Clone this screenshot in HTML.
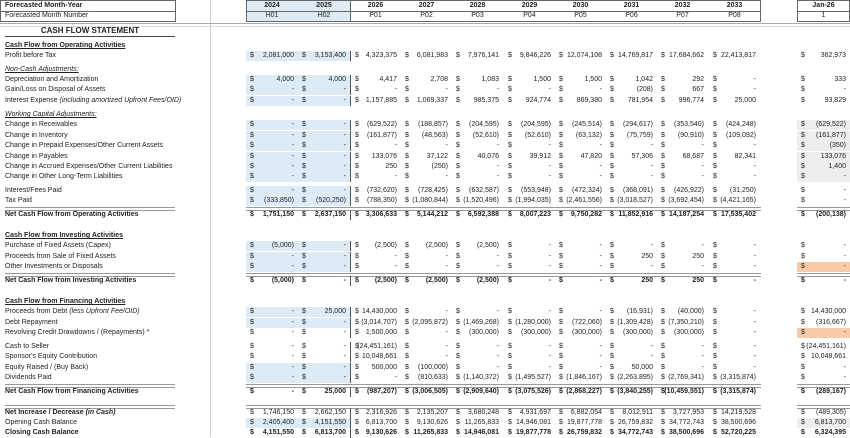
<!DOCTYPE html>
<html><head><meta charset="utf-8"><style>
body{margin:0;width:850px;height:437px;overflow:hidden;background:#fff;font-family:"Liberation Sans",Arial,sans-serif;color:#222;position:relative}
.r{position:absolute;left:0;width:850px;height:10px;line-height:10px;font-size:7px;white-space:nowrap}
.l{position:absolute;left:5px;top:0}
.r i{position:absolute;top:0;width:51px;height:10px;text-align:right;font-style:normal;box-sizing:border-box;padding-right:4px}
.r i::before{content:"$";position:absolute;left:4px}
.r i:nth-of-type(1){left:246px;width:52px}
.r i:nth-of-type(2){left:298px;width:52px}
.r i:nth-of-type(3){left:350px;border-left:1px solid #555}
.r i:nth-of-type(4){left:401px}
.r i:nth-of-type(5){left:452px}
.r i:nth-of-type(6){left:504px}
.r i:nth-of-type(7){left:555px}
.r i:nth-of-type(8){left:606px}
.r i:nth-of-type(9){left:657px}
.r i:nth-of-type(10){left:709px}
.r i:nth-of-type(11){left:797px;width:53px}
.bl i:nth-of-type(1),.bl i:nth-of-type(2){background:#ddebf7}
.gr i:nth-of-type(11){background:#ededed}
.or i:nth-of-type(11){background:#f8cba8}
.b{font-weight:bold}
.h{font-weight:bold;text-decoration:underline}
.s{font-style:italic;text-decoration:underline}
.ln{position:absolute;height:2px;border-top:1px solid #999;border-bottom:1px solid #999}
.box{position:absolute;border:1px solid #666;box-sizing:border-box}
.hc{position:absolute;font-size:7px;line-height:10px;text-align:center;width:51px}
</style></head><body>
<div style="position:absolute;left:210px;top:0;width:1px;height:437px;background:#ccc"></div>
<div style="position:absolute;left:0;top:23px;width:850px;height:2px;border-top:1px solid #aaa;border-bottom:1px solid #ddd"></div>
<div class="box" style="left:0;top:0;width:176px;height:22px"></div>
<div style="position:absolute;left:0;top:11px;width:176px;height:1px;background:#666"></div>
<div class="r b" style="top:1px"><span class="l">Forecasted Month-Year</span></div>
<div class="r" style="top:11px"><span class="l">Forecasted Month Number</span></div>
<div style="position:absolute;left:246px;top:0;width:104px;height:22px;background:#ddebf7"></div>
<div class="box" style="left:246px;top:0;width:515px;height:22px"></div>
<div style="position:absolute;left:246px;top:11px;width:515px;height:1px;background:#666"></div>
<div style="position:absolute;left:350px;top:0;width:1px;height:22px;background:#666"></div>
<div class="box" style="left:797px;top:0;width:53px;height:22px"></div>
<div style="position:absolute;left:797px;top:11px;width:53px;height:1px;background:#666"></div>
<div class="hc b" style="left:246px;top:1px;width:52px">2024</div><div class="hc" style="left:246px;top:11px;width:52px">H01</div>
<div class="hc b" style="left:298px;top:1px;width:52px">2025</div><div class="hc" style="left:298px;top:11px;width:52px">H02</div>
<div class="hc b" style="left:350px;top:1px">2026</div><div class="hc" style="left:350px;top:11px">P01</div>
<div class="hc b" style="left:401px;top:1px">2027</div><div class="hc" style="left:401px;top:11px">P02</div>
<div class="hc b" style="left:452px;top:1px">2028</div><div class="hc" style="left:452px;top:11px">P03</div>
<div class="hc b" style="left:504px;top:1px">2029</div><div class="hc" style="left:504px;top:11px">P04</div>
<div class="hc b" style="left:555px;top:1px">2030</div><div class="hc" style="left:555px;top:11px">P05</div>
<div class="hc b" style="left:606px;top:1px">2031</div><div class="hc" style="left:606px;top:11px">P06</div>
<div class="hc b" style="left:657px;top:1px">2032</div><div class="hc" style="left:657px;top:11px">P07</div>
<div class="hc b" style="left:709px;top:1px">2033</div><div class="hc" style="left:709px;top:11px">P08</div>
<div class="hc b" style="left:797px;top:1px;width:53px">Jan-26</div><div class="hc" style="left:797px;top:11px;width:53px">1</div>

<div style="position:absolute;left:5px;top:26px;width:170px;text-align:center;font-size:8px;font-weight:bold;line-height:10px">CASH FLOW STATEMENT</div>
<div style="position:absolute;left:5px;top:36px;width:170px;height:1px;background:#444"></div>

<div class="r" style="top:41px"><span class="l h">Cash Flow from Operating Activities</span></div>
<div class="r bl" style="top:51px"><span class="l">Profit before Tax</span><i>2,081,000</i><i>3,153,400</i><i>4,323,375</i><i>6,081,983</i><i>7,976,141</i><i>9,846,226</i><i>12,074,108</i><i>14,769,817</i><i>17,684,662</i><i>22,413,817</i><i>362,973</i></div>
<div class="r" style="top:65px"><span class="l s">Non-Cash Adjustments:</span></div>
<div class="r bl" style="top:75px"><span class="l">Depreciation and Amortization</span><i>4,000</i><i>4,000</i><i>4,417</i><i>2,708</i><i>1,083</i><i>1,500</i><i>1,500</i><i>1,042</i><i>292</i><i>-</i><i>333</i></div>
<div class="r bl" style="top:85px"><span class="l">Gain/Loss on Disposal of Assets</span><i>-</i><i>-</i><i>-</i><i>-</i><i>-</i><i>-</i><i>-</i><i>(208)</i><i>667</i><i>-</i><i>-</i></div>
<div class="r bl" style="top:96px"><span class="l">Interest Expense <em>(including amortized Upfront Fees/OID)</em></span><i>-</i><i>-</i><i>1,157,885</i><i>1,069,337</i><i>985,375</i><i>924,774</i><i>869,380</i><i>781,954</i><i>996,774</i><i>25,000</i><i>93,829</i></div>
<div class="r" style="top:110px"><span class="l s">Working Capital Adjustments:</span></div>
<div class="r bl gr" style="top:120px"><span class="l">Change in Receivables</span><i>-</i><i>-</i><i>(629,522)</i><i>(188,857)</i><i>(204,595)</i><i>(204,595)</i><i>(245,514)</i><i>(294,617)</i><i>(353,540)</i><i>(424,248)</i><i>(629,522)</i></div>
<div class="r bl gr" style="top:131px"><span class="l">Change in Inventory</span><i>-</i><i>-</i><i>(161,877)</i><i>(48,563)</i><i>(52,610)</i><i>(52,610)</i><i>(63,132)</i><i>(75,759)</i><i>(90,910)</i><i>(109,092)</i><i>(161,877)</i></div>
<div class="r bl gr" style="top:141px"><span class="l">Change in Prepaid Expenses/Other Current Assets</span><i>-</i><i>-</i><i>-</i><i>-</i><i>-</i><i>-</i><i>-</i><i>-</i><i>-</i><i>-</i><i>(350)</i></div>
<div class="r bl gr" style="top:152px"><span class="l">Change in Payables</span><i>-</i><i>-</i><i>133,076</i><i>37,122</i><i>40,076</i><i>39,912</i><i>47,820</i><i>57,306</i><i>68,687</i><i>82,341</i><i>133,076</i></div>
<div class="r bl gr" style="top:162px"><span class="l">Change in Accrued Expenses/Other Current Liabilities</span><i>-</i><i>-</i><i>250</i><i>(250)</i><i>-</i><i>-</i><i>-</i><i>-</i><i>-</i><i>-</i><i>1,400</i></div>
<div class="r bl gr" style="top:172px"><span class="l">Change in Other Long-Term Liabilities</span><i>-</i><i>-</i><i>-</i><i>-</i><i>-</i><i>-</i><i>-</i><i>-</i><i>-</i><i>-</i><i>-</i></div>
<div class="r bl" style="top:186px"><span class="l">Interest/Fees Paid</span><i>-</i><i>-</i><i>(732,620)</i><i>(728,425)</i><i>(632,587)</i><i>(553,948)</i><i>(472,324)</i><i>(368,091)</i><i>(426,922)</i><i>(31,250)</i><i>-</i></div>
<div class="r bl" style="top:196px"><span class="l">Tax Paid</span><i>(333,850)</i><i>(520,250)</i><i>(788,350)</i><i>(1,080,844)</i><i>(1,520,496)</i><i>(1,994,035)</i><i>(2,461,556)</i><i>(3,018,527)</i><i>(3,692,454)</i><i>(4,421,165)</i><i>-</i></div>
<div class="ln" style="left:5px;top:207px;width:170px"></div><div class="ln" style="left:246px;top:207px;width:515px"></div><div class="ln" style="left:797px;top:207px;width:53px"></div>
<div class="r b" style="top:210px"><span class="l">Net Cash Flow from Operating Activities</span><i>1,751,150</i><i>2,637,150</i><i>3,306,633</i><i>5,144,212</i><i>6,592,388</i><i>8,007,223</i><i>9,750,282</i><i>11,852,916</i><i>14,187,254</i><i>17,535,402</i><i>(200,138)</i></div>

<div class="r" style="top:231px"><span class="l h">Cash Flow from Investing Activities</span></div>
<div class="r bl" style="top:241px"><span class="l">Purchase of Fixed Assets (Capex)</span><i>(5,000)</i><i>-</i><i>(2,500)</i><i>(2,500)</i><i>(2,500)</i><i>-</i><i>-</i><i>-</i><i>-</i><i>-</i><i>-</i></div>
<div class="r bl" style="top:252px"><span class="l">Proceeds from Sale of Fixed Assets</span><i>-</i><i>-</i><i>-</i><i>-</i><i>-</i><i>-</i><i>-</i><i>250</i><i>250</i><i>-</i><i>-</i></div>
<div class="r bl or" style="top:262px"><span class="l">Other Investments or Disposals</span><i>-</i><i>-</i><i>-</i><i>-</i><i>-</i><i>-</i><i>-</i><i>-</i><i>-</i><i>-</i><i>-</i></div>
<div class="ln" style="left:5px;top:273px;width:170px"></div><div class="ln" style="left:246px;top:273px;width:515px"></div><div class="ln" style="left:797px;top:273px;width:53px"></div>
<div class="r b" style="top:276px"><span class="l">Net Cash Flow from Investing Activities</span><i>(5,000)</i><i>-</i><i>(2,500)</i><i>(2,500)</i><i>(2,500)</i><i>-</i><i>-</i><i>250</i><i>250</i><i>-</i><i>-</i></div>

<div class="r" style="top:297px"><span class="l h">Cash Flow from Financing Activities</span></div>
<div class="r bl" style="top:307px"><span class="l">Proceeds from Debt <em>(less Upfront Fee/OID)</em></span><i>-</i><i>25,000</i><i>14,430,000</i><i>-</i><i>-</i><i>-</i><i>-</i><i>(16,931)</i><i>(40,000)</i><i>-</i><i>14,430,000</i></div>
<div class="r bl" style="top:318px"><span class="l">Debt Repayment</span><i>-</i><i>-</i><i>(3,014,707)</i><i>(2,095,872)</i><i>(1,469,268)</i><i>(1,280,000)</i><i>(722,060)</i><i>(1,309,428)</i><i>(7,350,210)</i><i>-</i><i>(316,667)</i></div>
<div class="r or" style="top:328px"><span class="l">Revolving Credit Drawdowns / (Repayments) *</span><i>-</i><i>-</i><i>1,500,000</i><i>-</i><i>(300,000)</i><i>(300,000)</i><i>(300,000)</i><i>(300,000)</i><i>(300,000)</i><i>-</i><i>-</i></div>
<div class="r" style="top:342px"><span class="l">Cash to Seller</span><i>-</i><i>-</i><i>(24,451,161)</i><i>-</i><i>-</i><i>-</i><i>-</i><i>-</i><i>-</i><i>-</i><i>(24,451,161)</i></div>
<div class="r" style="top:352px"><span class="l">Sponsor's Equity Contribution</span><i>-</i><i>-</i><i>10,048,661</i><i>-</i><i>-</i><i>-</i><i>-</i><i>-</i><i>-</i><i>-</i><i>10,048,661</i></div>
<div class="r bl" style="top:363px"><span class="l">Equity Raised / (Buy Back)</span><i>-</i><i>-</i><i>500,000</i><i>(100,000)</i><i>-</i><i>-</i><i>-</i><i>50,000</i><i>-</i><i>-</i><i>-</i></div>
<div class="r bl" style="top:373px"><span class="l">Dividends Paid</span><i>-</i><i>-</i><i>-</i><i>(810,633)</i><i>(1,140,372)</i><i>(1,495,527)</i><i>(1,846,167)</i><i>(2,263,895)</i><i>(2,769,341)</i><i>(3,315,874)</i><i>-</i></div>
<div class="ln" style="left:5px;top:384px;width:170px"></div><div class="ln" style="left:246px;top:384px;width:515px"></div><div class="ln" style="left:797px;top:384px;width:53px"></div>
<div class="r b" style="top:387px"><span class="l">Net Cash Flow from Financing Activities</span><i>-</i><i>25,000</i><i>(987,207)</i><i>(3,006,505)</i><i>(2,909,640)</i><i>(3,075,526)</i><i>(2,868,227)</i><i>(3,840,255)</i><i>(10,459,551)</i><i>(3,315,874)</i><i>(289,167)</i></div>

<div class="ln" style="left:5px;top:405px;width:170px"></div><div class="ln" style="left:246px;top:405px;width:515px"></div><div class="ln" style="left:797px;top:405px;width:53px"></div>
<div class="r" style="top:408px"><span class="l b">Net Increase / Decrease <em>(in Cash)</em></span><i>1,746,150</i><i>2,662,150</i><i>2,316,926</i><i>2,135,207</i><i>3,680,248</i><i>4,931,697</i><i>6,882,054</i><i>8,012,911</i><i>3,727,953</i><i>14,219,528</i><i>(489,305)</i></div>
<div class="r bl gr" style="top:418px"><span class="l">Opening Cash Balance</span><i>2,405,400</i><i>4,151,550</i><i>6,813,700</i><i>9,130,626</i><i>11,265,833</i><i>14,946,081</i><i>19,877,778</i><i>26,759,832</i><i>34,772,743</i><i>38,500,696</i><i>6,813,700</i></div>
<div class="r b" style="top:428px"><span class="l">Closing Cash Balance</span><i>4,151,550</i><i>6,813,700</i><i>9,130,626</i><i>11,265,833</i><i>14,946,081</i><i>19,877,778</i><i>26,759,832</i><i>34,772,743</i><i>38,500,696</i><i>52,720,225</i><i>6,324,395</i></div>
</body></html>
